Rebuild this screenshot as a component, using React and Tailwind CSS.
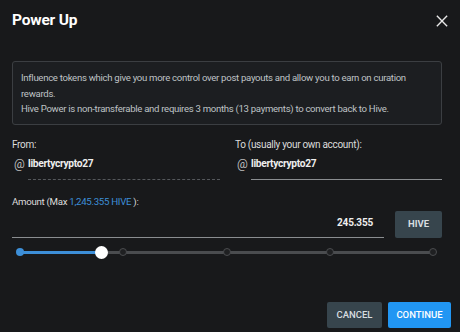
import React from "react";

const marks = [0, 25, 50, 75, 100];

export default function App() {
    const value = 245.355;
    const max = 1245.355;
    const pct = (value / max) * 100;
    return (
        <div className="w-[460px] h-[332px] bg-[#18191b] text-white font-['Roboto',sans-serif] flex flex-col pl-3 pr-[18px] overflow-hidden">
            <div className="flex items-center justify-between h-[40px] pt-[1px] mr-[-6px]">
                <h1 className="text-[15.5px] font-bold tracking-[-0.2px]">Power Up</h1>
                <button className="text-[#e8e8e8]">
                    <svg width="12" height="12" viewBox="0 0 14 14" fill="none" stroke="currentColor" strokeWidth="1.6">
                        <path d="M1 1L13 13M13 1L1 13" />
                    </svg>
                </button>
            </div>
            <div className="mt-[21px] border border-[#3b3e42] bg-[#1c1e21] rounded-[3px] pl-2 pr-2 pt-[8px] pb-[7px] text-[9.6px] leading-[15.5px] tracking-[-0.3px] text-[#bfc2c5]">
                <p>Influence tokens which give you more control over post payouts and allow you to earn on curation rewards.</p>
                <p>Hive Power is non-transferable and requires 3 months (13 payments) to convert back to Hive.</p>
            </div>
            <div className="grid grid-cols-[210px_1fr] gap-[13px] mt-[13px] text-[10px] tracking-[-0.3px]">
                <div>
                    <div className="h-[14px] leading-[14px] text-[#dcdcdc]">From:</div>
                    <div className="flex items-center h-[16px] mt-[4px]">
                        <span className="text-[12px] text-[#bdbdbd] w-[16px] pl-[2px]">@</span>
                        <span className="font-bold text-[10.2px] text-[#eeeeee]">libertycrypto27</span>
                    </div>
                    <div className="ml-[16px] mt-[7px] border-b border-dashed border-[#55585c] w-[192px]"></div>
                </div>
                <div>
                    <div className="h-[14px] leading-[14px] text-[#dcdcdc]">To (usually your own account):</div>
                    <div className="flex items-center h-[16px] mt-[4px]">
                        <span className="text-[12px] text-[#bdbdbd] w-[16px] pl-[2px]">@</span>
                        <span className="font-bold text-[10.2px] text-[#eeeeee]">libertycrypto27</span>
                    </div>
                    <div className="ml-[16px] mt-[7px] border-b border-[#8a8d90]"></div>
                </div>
            </div>
            <div className="mt-[15px] h-[14px] leading-[14px] text-[9.7px] tracking-[-0.3px] text-[#dcdcdc]">
                Amount (Max <span className="text-[#3d8fd8]">1,245.355 HIVE</span> ):
            </div>
            <div className="flex items-end gap-[11px] mt-[2px]">
                <div className="flex-1 border-b border-[#8a8d90] text-right pr-[11px] pb-[7px] text-[10px] font-bold tracking-[-0.2px] text-[#eeeeee]">
                    245.355
                </div>
                <button className="w-[47px] h-[27px] bg-[#37454d] rounded-[2px] text-[9.5px] font-bold text-[#d8dde0]">HIVE</button>
            </div>
            <div className="relative ml-[8px] mr-[9px] mt-[8px] h-[13px]">
                <div className="absolute left-0 right-0 top-[5px] h-[3px] bg-[#4a4c4f] rounded-full"></div>
                <div className="absolute left-0 top-[5px] h-[3px] bg-[#3d8fd8] rounded-full" style={{ width: pct + "%" }}></div>
                {marks.map(m => (
                    <div
                        key={m}
                        className={m <= pct ? "absolute top-[2.5px] w-[8px] h-[8px] -ml-[4px] rounded-full bg-[#3d8fd8]" : "absolute top-[2.5px] w-[8px] h-[8px] -ml-[4px] rounded-full bg-[#1f2022] border-[1.5px] border-[#4a4c4f]"}
                        style={{ left: m + "%" }}
                    ></div>
                ))}
                <div className="absolute top-0 w-[13px] h-[13px] -ml-[6.5px] rounded-full bg-white" style={{ left: pct + "%" }}></div>
            </div>
            <div className="flex justify-end gap-[6px] mt-auto mb-[4px] mr-[-9px]">
                <button className="h-[26px] w-[55px] bg-[#37454d] rounded-[2px] text-[9.5px] font-medium text-[#d8dde0]">CANCEL</button>
                <button className="h-[26px] w-[63px] bg-[#2196f3] rounded-[2px] text-[9.5px] font-medium text-white">CONTINUE</button>
            </div>
        </div>
    );
}
